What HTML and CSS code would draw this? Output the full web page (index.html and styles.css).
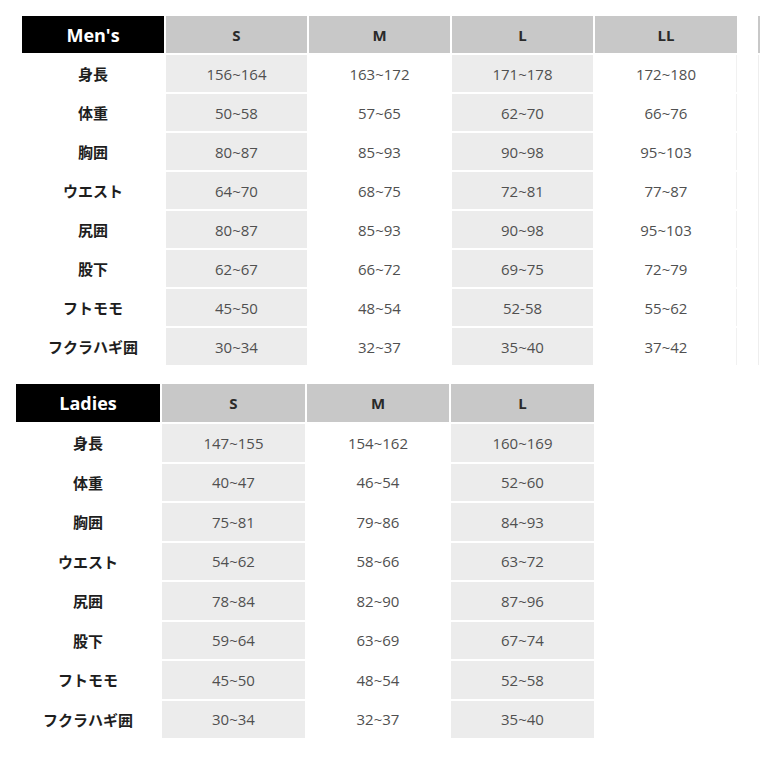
FILE: index.html
```html
<!DOCTYPE html>
<html lang="ja">
<head>
<meta charset="utf-8">
<title>Size chart</title>
<link rel="stylesheet" href="styles.css">
</head>
<body>
<div class="page">
  <div class="men-wrap">
    <div class="chart men">
      <div class="cell head-black">Men's</div>
      <div class="cell head">S</div>
      <div class="cell head">M</div>
      <div class="cell head">L</div>
      <div class="cell head">LL</div>

      <div class="cell label">身長</div><div class="cell num g">156~164</div><div class="cell num">163~172</div><div class="cell num g">171~178</div><div class="cell num edge">172~180</div>
      <div class="cell label">体重</div><div class="cell num g">50~58</div><div class="cell num">57~65</div><div class="cell num g">62~70</div><div class="cell num edge">66~76</div>
      <div class="cell label">胸囲</div><div class="cell num g">80~87</div><div class="cell num">85~93</div><div class="cell num g">90~98</div><div class="cell num edge">95~103</div>
      <div class="cell label">ウエスト</div><div class="cell num g">64~70</div><div class="cell num">68~75</div><div class="cell num g">72~81</div><div class="cell num edge">77~87</div>
      <div class="cell label">尻囲</div><div class="cell num g">80~87</div><div class="cell num">85~93</div><div class="cell num g">90~98</div><div class="cell num edge">95~103</div>
      <div class="cell label">股下</div><div class="cell num g">62~67</div><div class="cell num">66~72</div><div class="cell num g">69~75</div><div class="cell num edge">72~79</div>
      <div class="cell label">フトモモ</div><div class="cell num g">45~50</div><div class="cell num">48~54</div><div class="cell num g">52-58</div><div class="cell num edge">55~62</div>
      <div class="cell label">フクラハギ囲</div><div class="cell num g">30~34</div><div class="cell num">32~37</div><div class="cell num g">35~40</div><div class="cell num edge">37~42</div>
    </div>
    <div class="stub">
      <div class="stub-head"></div>
      <div class="stub-body"></div>
    </div>
  </div>

  <div class="chart ladies">
    <div class="cell head-black">Ladies</div>
    <div class="cell head">S</div>
    <div class="cell head">M</div>
    <div class="cell head">L</div>

    <div class="cell label">身長</div><div class="cell num g">147~155</div><div class="cell num">154~162</div><div class="cell num g">160~169</div>
    <div class="cell label">体重</div><div class="cell num g">40~47</div><div class="cell num">46~54</div><div class="cell num g">52~60</div>
    <div class="cell label">胸囲</div><div class="cell num g">75~81</div><div class="cell num">79~86</div><div class="cell num g">84~93</div>
    <div class="cell label">ウエスト</div><div class="cell num g">54~62</div><div class="cell num">58~66</div><div class="cell num g">63~72</div>
    <div class="cell label">尻囲</div><div class="cell num g">78~84</div><div class="cell num">82~90</div><div class="cell num g">87~96</div>
    <div class="cell label">股下</div><div class="cell num g">59~64</div><div class="cell num">63~69</div><div class="cell num g">67~74</div>
    <div class="cell label">フトモモ</div><div class="cell num g">45~50</div><div class="cell num">48~54</div><div class="cell num g">52~58</div>
    <div class="cell label">フクラハギ囲</div><div class="cell num g">30~34</div><div class="cell num">32~37</div><div class="cell num g">35~40</div>
  </div>
</div>
</body>
</html>
```

FILE: styles.css
```css
html, body {
  margin: 0;
  padding: 0;
  background: #ffffff;
}

.page {
  width: 760px;
  height: 760px;
  overflow: hidden;
  padding-top: 16px;
  box-sizing: border-box;
  font-family: "Open Sans", "Noto Sans CJK JP", sans-serif;
}

.men-wrap {
  display: flex;
  align-items: flex-start;
  margin-left: 22px;
}

.chart {
  display: grid;
  column-gap: 2px;
  row-gap: 2px;
}

.men {
  grid-template-columns: 142px 141px 141px 141px 142px;
  grid-template-rows: 37px repeat(8, 37px);
}

.ladies {
  margin-top: 19px;
  margin-left: 16px;
  width: max-content;
  grid-template-columns: 144px 143px 142px 143px;
  grid-template-rows: 38px repeat(8, 37.5px);
}

.cell {
  display: flex;
  align-items: center;
  justify-content: center;
  white-space: nowrap;
}

.head-black {
  background: #000000;
  color: #ffffff;
  font-weight: 700;
  font-size: 18px;
}

.head {
  background: #c8c8c8;
  color: #2a2a2a;
  font-weight: 700;
  font-size: 15px;
}

.label {
  font-family: "Noto Sans CJK JP", sans-serif;
  font-weight: 700;
  font-size: 15px;
  color: #1e1e1e;
}

.num {
  font-size: 15px;
  color: #505050;
}

.g {
  background: #ececec;
}

.edge {
  box-shadow: inset -1px 0 0 #f1f1f1;
}

.stub {
  margin-left: 21px;
  width: 141px;
  flex: none;
  display: flex;
  flex-direction: column;
  gap: 2px;
}

.stub-head {
  height: 37px;
  background: #c8c8c8;
}

.stub-body {
  height: 310px;
  border-left: 1px solid #eeeeee;
}
```
